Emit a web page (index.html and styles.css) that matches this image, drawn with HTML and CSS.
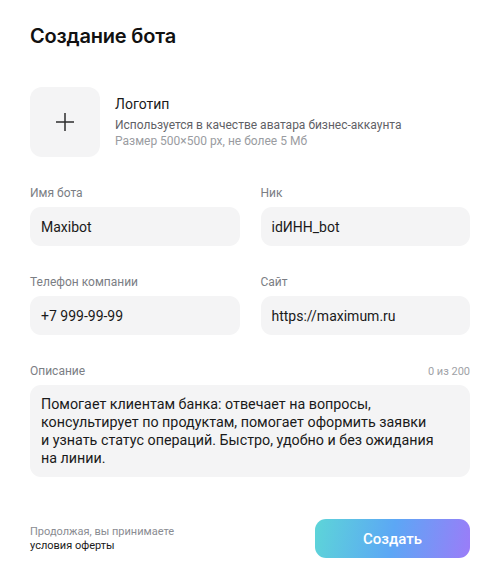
FILE: index.html
```html
<!DOCTYPE html>
<html lang="ru">
<head>
    <meta charset="UTF-8">
    <meta name="viewport" content="width=device-width, initial-scale=1.0">
    <title>Создание бота</title>
    <link rel="stylesheet" href="styles.css">
</head>
<body>
<div class="page">
    <h1 class="title">Создание бота</h1>

    <!-- Logo upload -->
    <div class="logo-row">
        <div class="logo-box">
            <svg width="20" height="20" viewBox="0 0 20 20">
                <path d="M10 1v18M1 10h18" stroke="#2c2d2e" stroke-width="1.5" fill="none"/>
            </svg>
        </div>
        <div class="logo-info">
            <div class="logo-name">Логотип</div>
            <div class="logo-desc">Используется в качестве аватара бизнес-аккаунта</div>
            <div class="logo-hint">Размер 500×500 px, не более 5 Мб</div>
        </div>
    </div>

    <!-- Fields -->
    <div class="fields">
        <div class="field">
            <label class="label">Имя бота</label>
            <div class="input">Maxibot</div>
        </div>
        <div class="field">
            <label class="label">Ник</label>
            <div class="input">idИНН_bot</div>
        </div>
        <div class="field">
            <label class="label">Телефон компании</label>
            <div class="input">+7 999-99-99</div>
        </div>
        <div class="field">
            <label class="label">Сайт</label>
            <div class="input">https://maximum.ru</div>
        </div>
    </div>

    <div class="desc">
        <div class="desc-head">
            <label class="label">Описание</label>
            <span class="counter">0 из 200</span>
        </div>
        <div class="textarea">Помогает клиентам банка: отвечает на вопросы,<br>
            консультирует по продуктам, помогает оформить заявки<br>
            и узнать статус операций. Быстро, удобно и без ожидания<br>
            на линии.</div>
    </div>

    <div class="footer">
        <div class="terms">
            <div class="terms-gray">Продолжая, вы принимаете</div>
            <div class="terms-link">условия оферты</div>
        </div>
        <button class="create-btn">Создать</button>
    </div>
</div>
</body>
</html>
```

FILE: styles.css
```css
body {
    margin: 0;
    background-color: #ffffff;
    font-family: Roboto, "Noto Sans", sans-serif;
    color: #1a1a1a;
}
.page {
    padding: 26px 24px 0 30px;
}
.title {
    margin: 0;
    font-family: Inter, sans-serif;
    font-size: 20px;
    font-weight: 600;
    line-height: 20px;
    letter-spacing: -0.2px;
    color: #111;
}
.logo-row {
    display: flex;
    align-items: center;
    gap: 15px;
    margin-top: 41px;
}
.logo-box {
    width: 70px;
    height: 70px;
    border-radius: 12px;
    background-color: #f4f4f5;
    display: flex;
    justify-content: center;
    align-items: center;
}
.logo-name {
    font-size: 14px;
    line-height: 18px;
    color: #1a1a1a;
    margin-bottom: 4px;
}
.logo-desc {
    font-size: 12px;
    line-height: 16px;
    color: #5f6166;
}
.logo-hint {
    font-size: 12px;
    line-height: 16px;
    color: #9a9ca1;
}
.fields {
    display: grid;
    grid-template-columns: 1fr 1fr;
    column-gap: 21px;
    row-gap: 29px;
    margin-top: 29px;
}
.label {
    display: block;
    font-size: 12px;
    line-height: 14px;
    color: #7b7e84;
    margin-bottom: 7px;
}
.input {
    height: 39px;
    box-sizing: border-box;
    padding: 0 11px;
    border-radius: 11px;
    background-color: #f4f4f5;
    font-size: 14px;
    display: flex;
    align-items: center;
    color: #1a1a1a;
}
.desc {
    margin-top: 29px;
}
.desc-head {
    display: flex;
    justify-content: space-between;
    align-items: baseline;
}
.counter {
    font-size: 11px;
    color: #a0a2a7;
}
.textarea {
    box-sizing: border-box;
    height: 92px;
    padding: 10px 11px 0 11px;
    border-radius: 11px;
    background-color: #f4f4f5;
    font-size: 14.3px;
    line-height: 18px;
    color: #1a1a1a;
}
.footer {
    display: flex;
    justify-content: space-between;
    align-items: center;
    margin-top: 42px;
}
.terms {
    font-size: 11px;
    line-height: 14px;
}
.terms-gray {
    color: #8a8c92;
}
.terms-link {
    color: #1a1a1a;
}
.create-btn {
    width: 155px;
    height: 39px;
    border: none;
    border-radius: 11px;
    background: linear-gradient(100deg, #5dd5d8 0%, #5ca7f5 50%, #9b7cf8 100%);
    color: #ffffff;
    font-family: Roboto, sans-serif;
    font-size: 15px;
    font-weight: 500;
    cursor: pointer;
}
```
